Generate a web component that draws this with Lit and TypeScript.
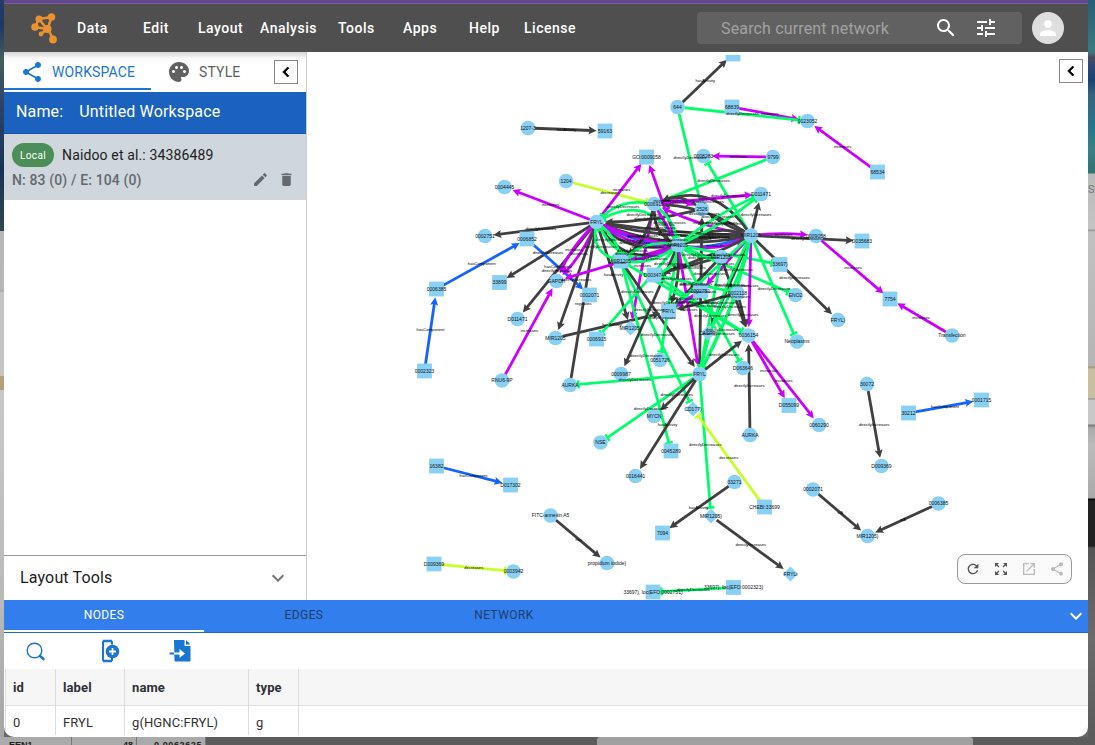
import { LitElement, html, css, svg } from "lit";
import { customElement } from "lit/decorators.js";

type Shape = "c" | "s" | "d";
type GraphNode = [string, Shape, number, number, string];
type Kind = "k" | "g" | "m" | "b" | "y";
// from, to, kind, label, bend (perpendicular control offset)
type GraphEdge = [string, string, Kind, string, number?];

const COLORS: Record<Kind, string> = { k: "#404040", g: "#00ff6a", m: "#cc00ff", b: "#1464ff", y: "#c8ff28" };
const DD = "directlyDecreases";
const DI = "directlyIncreases";
const INC = "increases";
const DEC = "decreases";
const HC = "hasComponent";
const HA = "hasActivity";
const REG = "regulates";

const NODES: GraphNode[] = [
  ["n644", "c", 677.5, 107, "644"], ["top", "s", 733, 54, ""], ["68839", "s", 732, 107, "68839"],
  ["23052", "c", 807.5, 121, "0023052"], ["68534", "s", 877.5, 172, "68534"], ["9799", "c", 773, 157, "9799"],
  ["8283", "c", 703.5, 156, "0008283"], ["go", "s", 646.5, 157, "GO:0009058"], ["1207", "c", 528, 128, "1207-3"],
  ["59163", "s", 605, 131, "59163"], ["4445", "c", 504.5, 187, "0004445"], ["1204", "c", 566, 181, "1204"],
  ["2751", "c", 485, 236, "0002751"], ["6852", "s", 527, 239, "0006852"], ["6385", "s", 436.5, 289, "0006385"],
  ["2323", "s", 424.5, 371, "0002323"], ["33899", "s", 499.5, 282.5, "33899"], ["F", "c", 596.5, 222, "FRYL"],
  ["6915", "c", 654, 204, "0006915"], ["2526", "c", 702, 209, "2526"], ["H", "c", 751, 235.5, "MIR1205"],
  ["J", "c", 678, 245, "MIR1205"], ["11471", "c", 761, 194, "D011471"], ["9058", "c", 816, 236, "0009058"],
  ["35683", "s", 862, 241, "D035683"], ["33697", "s", 780, 264.5, "33697)"], ["EN", "c", 795.5, 295, "ENO2"],
  ["7754", "s", 890, 299, "7754"], ["TR", "c", 952, 335.5, "Transfection"], ["FR2", "c", 838, 320, "FRYL)"],
  ["NEO", "c", 797, 341.5, "Neoplasms"], ["GA", "c", 556.5, 281, "GAPDH"], ["2071", "s", 589.5, 295, "0002071"],
  ["MS", "s", 621, 261, "MIR1205"], ["3474", "s", 654, 275, "D003474"], ["FS", "s", 668.5, 311.5, "FRYL"],
  ["MC", "c", 721, 257, "MIR1205"], ["SQ", "s", 700.5, 291, "0002751"], ["2118", "c", 737.5, 293, "0002118"],
  ["CA", "d", 708, 333, "CASP7)"], ["36154", "c", 748.5, 335.5, "0036154"], ["FB", "c", 699.5, 374, "FRYL"],
  ["MD", "d", 630.5, 328, "MIR1205)"], ["M5", "c", 555.5, 338, "MIR1205"], ["S15", "s", 596.5, 339, "0006915"],
  ["D11", "c", 517.5, 319, "D011471"], ["RNU", "c", 502, 380.5, "RNU6-9P"], ["AU", "c", 570, 385, "AURKA"],
  ["9987", "c", 621, 374, "0009987"], ["51726", "c", 660, 360, "0051726"], ["63646", "c", 743, 368, "D063646"],
  ["55099", "s", 789, 405.5, "D055099"], ["60290", "c", 819, 425, "0060290"], ["AU2", "c", 750, 435, "AURKA"],
  ["CD", "d", 693, 409, "CD177)"], ["MY", "c", 654, 416, "MYCN"], ["NSE", "c", 600.5, 442.5, "NSE"],
  ["45289", "s", 671, 451, "0045289"], ["16441", "c", 635.5, 476, "0016441"], ["33271", "c", 734.5, 482, "33271"],
  ["CH", "s", 764.5, 507, "CHEBI:33699"], ["7094", "s", 662.5, 533, "7094"], ["MD2", "d", 711, 516, "MIR1205)"],
  ["FD", "d", 790.5, 574, "FRYLi"], ["L1", "s", 653, 592, "33697), loc(EFO:0002751)"],
  ["L2", "s", 733.5, 587.5, "33697), loc(EFO:0002323)"], ["30072", "c", 867, 384, "30072"],
  ["9369", "c", 881.5, 466, "D009369"], ["30212", "s", 908.5, 413, "30212"], ["1715", "s", 981.5, 400, "0001715"],
  ["2071b", "c", 813, 489.5, "0002071"], ["M6", "c", 867.5, 536, "MIR1205)"], ["6385b", "c", 938.5, 503.5, "0006385"],
  ["16382", "s", 436.5, 466, "16382"], ["17302", "s", 510.5, 485, "D017302"], ["FI", "c", 550.5, 515.5, "FITC-annexin A5"],
  ["PI", "c", 607, 563, "propidium iodide)"], ["9369b", "s", 434, 564, "D009369"], ["3942", "c", 513.5, 571.5, "0003942"],
];

const EDGES: GraphEdge[] = [
  ["n644", "top", "k", HA], ["68839", "23052", "m", INC], ["n644", "23052", "g", DD], ["n644", "2526", "g", DD],
  ["68534", "23052", "m", INC], ["9799", "8283", "m", INC], ["9799", "6915", "g", DD], ["H", "8283", "g", DD],
  ["1207", "59163", "k", HA], ["F", "4445", "m", INC], ["1204", "6915", "y", DEC], ["F", "2751", "k", DI],
  ["F", "33899", "k", DI], ["6385", "6852", "b", HC], ["2323", "6385", "b", HC], ["6852", "2071", "b", HC],
  ["F", "go", "m", INC], ["J", "go", "m", INC], ["F", "D11", "k", DI], ["F", "GA", "m", INC, 4], ["F", "GA", "m", INC, -4],
  ["F", "M5", "k", DI], ["AU", "F", "k", REG], ["F", "MD", "k", HA], ["M5", "FS", "k", HA], ["RNU", "GA", "m", INC],
  ["J", "GA", "m", INC], ["6915", "MD", "m", INC], ["J", "S15", "g", DD], ["MS", "45289", "g", DD],
  ["MS", "CD", "g", DD], ["J", "9987", "k", DI], ["MS", "FB", "k", DI], ["J", "51726", "g", DD],
  ["F", "H", "b", INC, -20], ["H", "F", "k", DI, 3], ["H", "F", "k", DI, 14], ["H", "F", "k", DI, 7],
  ["J", "F", "k", DI, 12], ["F", "J", "k", DI, -22], ["F", "J", "m", INC, -9], ["F", "J", "m", INC, -4],
  ["J", "F", "g", DD, 26], ["6915", "F", "g", DD, -9], ["J", "F", "g", DD, -25], ["F", "MS", "g", DD, -12],
  ["F", "MS", "g", DD, 5], ["6915", "MS", "k", DI, 7], ["2526", "F", "k", DI, 4], ["2526", "6915", "k", DI, -8],
  ["6915", "2526", "m", INC, 5], ["H", "6915", "k", DI, -24], ["H", "6915", "k", DI, -8], ["H", "2526", "k", DI, 2],
  ["H", "6915", "m", INC, 4], ["H", "J", "k", DI, -5], ["J", "H", "k", DI, 9], ["J", "H", "m", INC, -7],
  ["J", "H", "k", DI, 3], ["6915", "J", "m", INC], ["6915", "J", "g", DD, 5], ["6915", "J", "k", DI, -8],
  ["J", "MS", "g", DD, -8], ["J", "MS", "m", INC, 3], ["J", "MS", "g", DD, 7], ["MC", "3474", "k", DI],
  ["H", "3474", "k", DI, 3], ["J", "3474", "g", DD, 7], ["J", "FS", "k", DI, 4], ["MC", "FS", "k", DI],
  ["J", "FB", "m", INC], ["FB", "2526", "k", DI], ["H", "SQ", "m", INC], ["J", "SQ", "g", DD],
  ["J", "MC", "g", DD, -5], ["H", "FS", "g", DD], ["6915", "11471", "m", INC], ["J", "11471", "g", DD, -4],
  ["J", "11471", "g", DD, 4], ["H", "11471", "k", DI], ["H", "9058", "m", INC, 2], ["H", "35683", "k", DI],
  ["9058", "7754", "m", INC], ["TR", "7754", "m", INC], ["J", "33697", "g", DD], ["J", "EN", "g", DD],
  ["H", "NEO", "g", DD], ["H", "FR2", "k", DI], ["H", "36154", "m", INC], ["MC", "36154", "k", DI],
  ["H", "CA", "k", DI], ["H", "CA", "g", DD, 5], ["H", "FB", "g", DD, -6],
  ["H", "FB", "g", DD, 6], ["2118", "FB", "g", DD], ["MC", "FB", "g", DD],
  ["MS", "36154", "g", DD], ["3474", "36154", "g", DD], ["3474", "2118", "g", DD], ["SQ", "63646", "g", DD],
  ["2118", "36154", "k", DI], ["SQ", "FS", "m", INC], ["2118", "FS", "k", DI], ["FB", "36154", "k", DI],
  ["36154", "55099", "m", INC], ["36154", "60290", "m", INC], ["AU2", "36154", "k", DI], ["FB", "AU", "g", DD],
  ["FB", "NSE", "g", DD], ["FB", "MY", "k", DD], ["FB", "16441", "k", HA], ["FB", "MD2", "g", DD],
  ["CH", "CD", "y", DEC], ["33271", "7094", "k", HA], ["MD2", "FD", "k", DI], ["L2", "L1", "g", DD],
  ["30072", "9369", "k", DI], ["30212", "1715", "b", HC], ["2071b", "M6", "k", "isA"], ["6385b", "M6", "k", "isA"],
  ["16382", "17302", "b", HC], ["FI", "PI", "k", "has"], ["9369b", "3942", "y", DEC],
];

@customElement("network-graph")
export class NetworkGraph extends LitElement {
  static styles = css`
    :host { display: block; width: 781px; height: 548px; }
    svg { display: block; width: 100%; height: 100%; font-family: "Liberation Sans", Arial, sans-serif; }
    .line { fill: none; stroke-width: 2.8; }
    .edge-label { font-size: 4.1px; fill: #000; text-anchor: middle; }
    .node-label { font-size: 5px; fill: #111; text-anchor: middle; }
    .node { fill: #89d0f5; }
  `;

  private edge([from, to, kind, label, bend = 0]: GraphEdge) {
    const a = NODES.find((n) => n[0] === from)!;
    const b = NODES.find((n) => n[0] === to)!;
    const [x1, y1, x2, y2] = [a[2], a[3], b[2], b[3]];
    const len = Math.hypot(x2 - x1, y2 - y1);
    const cx = (x1 + x2) / 2 + ((y2 - y1) / len) * bend * 1.6;
    const cy = (y1 + y2) / 2 - ((x2 - x1) / len) * bend * 1.6;
    const inLen = Math.hypot(x2 - cx, y2 - cy);
    const ux = (x2 - cx) / inLen;
    const uy = (y2 - cy) / inLen;
    const outLen = Math.hypot(cx - x1, cy - y1);
    const sx = x1 + ((cx - x1) / outLen) * 7;
    const sy = y1 + ((cy - y1) / outLen) * 7;
    const gap = 8.4;
    const tx = x2 - ux * gap;
    const ty = y2 - uy * gap;
    const tee = kind === "g" || kind === "y";
    const ex = tee ? tx : tx - ux * 5;
    const ey = tee ? ty : ty - uy * 5;
    const color = COLORS[kind];
    const head = tee
      ? svg`<path d="M${tx - uy * 4} ${ty + ux * 4}L${tx + uy * 4} ${ty - ux * 4}" stroke=${color} stroke-width="2.4"/>`
      : svg`<path d="M${tx} ${ty}L${tx - ux * 8 - uy * 4} ${ty - uy * 8 + ux * 4}L${tx - ux * 6.6} ${ty - uy * 6.6}L${tx - ux * 8 + uy * 4} ${ty - uy * 8 - ux * 4}Z" fill=${color}/>`;
    return {
      shape: svg`<path class="line" stroke=${color} d="M${sx} ${sy}Q${cx} ${cy} ${ex} ${ey}"/>${head}`,
      label: svg`<text class="edge-label" x=${(x1 + x2) / 4 + cx / 2} y=${(y1 + y2) / 4 + cy / 2 + 1.4}>${label}</text>`,
    };
  }

  private node([, shape, x, y, label]: GraphNode) {
    return svg`${
      shape === "c"
        ? svg`<circle class="node" cx=${x} cy=${y} r="7.3"/>`
        : shape === "s"
          ? svg`<rect class="node" x=${x - 7.4} y=${y - 7.4} width="14.8" height="14.8"/>`
          : svg`<path class="node" d="M${x} ${y - 7.4}L${x + 7.4} ${y}L${x} ${y + 7.4}L${x - 7.4} ${y}Z"/>`
    }<text class="node-label" x=${x} y=${y + 1.8}>${label}</text>`;
  }

  render() {
    const edges = EDGES.map((e) => this.edge(e));
    return html`<svg viewBox="307 52 781 548">
      <defs><clipPath id="area"><rect x="307" y="55" width="781" height="545" /></clipPath></defs>
      <g clip-path="url(#area)">
        ${edges.map((e) => e.shape)} ${NODES.map((n) => this.node(n))} ${edges.map((e) => e.label)}
      </g>
    </svg>`;
  }
}

const icon = (d: string, size: number, cls = "") =>
  html`<svg class="icon ${cls}" width=${size} height=${size} viewBox="0 0 24 24"><path d=${d} /></svg>`;

const ICONS = {
  search: "M15.5 14h-.79l-.28-.27C15.41 12.59 16 11.11 16 9.5 16 5.91 13.09 3 9.5 3S3 5.91 3 9.5 5.91 16 9.5 16c1.61 0 3.09-.59 4.23-1.57l.27.28v.79l5 4.99L20.49 19l-4.99-5zm-6 0C7.01 14 5 11.99 5 9.5S7.01 5 9.5 5 14 7.01 14 9.5 11.99 14 9.5 14z",
  tune: "M3 17v2h6v-2H3zM3 5v2h10V5H3zm10 16v-2h8v-2h-8v-2h-2v6h2zM7 9v2H3v2h4v2h2V9H7zm14 4v-2H11v2h10zm-6-4h2V7h4V5h-4V3h-2v6z",
  person: "M12 12c2.21 0 4-1.79 4-4s-1.79-4-4-4-4 1.79-4 4 1.79 4 4 4zm0 2c-2.67 0-8 1.34-8 4v2h16v-2c0-2.66-5.33-4-8-4z",
  share: "M18 16.08c-.76 0-1.44.3-1.96.77L8.91 12.7c.05-.23.09-.46.09-.7s-.04-.47-.09-.7l7.05-4.11c.54.5 1.25.81 2.04.81 1.66 0 3-1.34 3-3s-1.34-3-3-3-3 1.34-3 3c0 .24.04.47.09.7L8.04 9.81C7.5 9.31 6.79 9 6 9c-1.66 0-3 1.34-3 3s1.34 3 3 3c.79 0 1.5-.31 2.04-.81l7.12 4.16c-.05.21-.08.43-.08.65 0 1.61 1.31 2.92 2.92 2.92 1.61 0 2.92-1.31 2.92-2.92s-1.31-2.92-2.92-2.92z",
  palette: "M12 2C6.49 2 2 6.49 2 12s4.49 10 10 10c1.38 0 2.5-1.12 2.5-2.5 0-.61-.23-1.2-.64-1.67-.08-.1-.13-.21-.13-.33 0-.28.22-.5.5-.5H16c3.31 0 6-2.69 6-6 0-4.96-4.49-9-10-9zm-5.5 11c-.83 0-1.5-.67-1.5-1.5S5.67 10 6.5 10s1.5.67 1.5 1.5S7.33 13 6.5 13zm3-4C8.67 9 8 8.33 8 7.5S8.67 6 9.5 6s1.5.67 1.5 1.5S10.33 9 9.5 9zm5 0c-.83 0-1.5-.67-1.5-1.5S13.67 6 14.5 6s1.5.67 1.5 1.5S15.33 9 14.5 9zm3 4c-.83 0-1.5-.67-1.5-1.5s.67-1.5 1.5-1.5 1.5.67 1.5 1.5-.67 1.5-1.5 1.5z",
  left: "M15.41 7.41L14 6l-6 6 6 6 1.41-1.41L10.83 12z",
  down: "M7.41 8.59L12 13.17l4.59-4.58L18 10l-6 6-6-6z",
  edit: "M3 17.25V21h3.75L17.81 9.94l-3.75-3.75L3 17.25zM20.71 7.04c.39-.39.39-1.02 0-1.41l-2.34-2.34c-.39-.39-1.02-.39-1.41 0l-1.83 1.83 3.75 3.75 1.83-1.83z",
  trash: "M6 19c0 1.1.9 2 2 2h8c1.1 0 2-.9 2-2V7H6v12zM19 4h-3.5l-1-1h-5l-1 1H5v2h14V4z",
  refresh: "M17.65 6.35C16.2 4.9 14.21 4 12 4c-4.42 0-7.99 3.58-7.99 8s3.57 8 7.99 8c3.73 0 6.84-2.55 7.73-6h-2.08c-.82 2.33-3.04 4-5.65 4-3.31 0-6-2.69-6-6s2.69-6 6-6c1.66 0 3.14.69 4.22 1.78L13 11h7V4l-2.35 2.35z",
  fit: "M15 3l2.3 2.3-2.89 2.87 1.42 1.42L18.7 6.7 21 9V3zM3 9l2.3-2.3 2.87 2.89 1.42-1.42L6.7 5.3 9 3H3zm6 12l-2.3-2.3 2.89-2.87-1.42-1.42L5.3 17.3 3 15v6zm12-6l-2.3 2.3-2.87-2.89-1.42 1.42 2.89 2.87L15 21h6z",
  open: "M19 19H5V5h7V3H3v18h18v-9h-2v7zM14 3v2h3.59l-9.83 9.83 1.41 1.41L19 6.41V10h2V3h-7z",
};

@customElement("app-root")
export class AppRoot extends LitElement {
  static styles = css`
    :host {
      display: block; width: 1095px; height: 745px; overflow: hidden;
      font-family: Roboto, sans-serif; color: #222;
    }
    * { box-sizing: border-box; }
    .icon { display: block; fill: currentColor; flex: none; }
    .desktop {
      display: grid; grid-template-columns: 4px 1084px 7px; grid-template-rows: 737px 8px; height: 745px;
      background: #666;
    }
    .left-edge { background: linear-gradient(#263b65 0, #1d3764 25px, #465d5b 60px, #2b4368 105px, #183255 170px, #31484c 231px, #b8b8b8 231px, #b6b6b6 290px, #9bab9f 290px, #c4c4c4 293px, #c3c3c3 376px, #b5a07c 376px, #b5a07c 390px, #c8c8c8 390px, #b9b9b9 600px, #a5a5a5 737px); }
    .right-edge {
      padding-top: 183px; font-size: 11px; color: #777; overflow: hidden;
      background: linear-gradient(#246075 0, #3a7b83 52px, #4c4b60 57px, #2b4974 66px, #174275 80px, #35657e 95px, #26758d 125px, #3a8085 150px, #2d7370 173px, #bababa 174px, #c4c4c4 229px, #929292 230px, #c1c1c1 232px, #b5b5b5 366px, #9d9277 367px, #c8bea0 369px, #c8bea0 398px, #888 399px, #c8c8c8 400px, #c8c8c8 424px, #777 425px, #aaa 428px, #bbb 446px, #aaa 498px, #000 499px, #222 501px, #222 546px, #555 548px, #6b6b6b 640px, #5b5b5b 737px);
    }
    .bottom-edge {
      grid-column: 1 / 4; display: grid; grid-template-columns: 72px 65px 69px 391px 376px 1fr;
      overflow: hidden; font: bold 9px/13px "Liberation Sans", sans-serif; color: #222; background: #5c5c5c;
    }
    .cell { background: #aaa; border-right: 1px solid #777; height: 8px; overflow: hidden; text-align: right; padding: 2px 3px 0; }
    .cell.first { text-align: left; padding-left: 9px; }
    .cell.last { letter-spacing: 0.6px; }
    .dock { background: #a0a0a0; border-radius: 3px 3px 0 0; }
    .window {
      width: 1084px; height: 737px; background: #fff; border-radius: 0 0 10px 10px; overflow: hidden;
      display: grid; grid-template-rows: 4px 48px 548px 33px 36px 68px;
    }
    .strip { background: #60498b; border-bottom: 1px solid #8058a5; }
    .toolbar { background: #4f4f4f; color: #fff; display: flex; align-items: center; }
    .logo { width: 32px; height: 32px; margin-left: 24px; }
    nav {
      display: grid; grid-template-columns: 66px 55px 62px 78px 65px 66px 55px 80px; margin-left: 17px;
      font-size: 14px; font-weight: 500; letter-spacing: 0.5px;
    }
    .search {
      width: 325px; height: 32px; margin-left: 93px; background: #616161; border-radius: 4px;
      display: flex; align-items: center; padding-left: 24px; color: #fff;
    }
    .search span { width: 213px; font-size: 16px; letter-spacing: 0.15px; color: #a1a1a1; }
    .search .tune { margin-left: 16px; }
    .avatar { width: 32px; height: 32px; margin-left: 10px; border-radius: 50%; background: #dedede; color: #fff; display: grid; place-items: center; }
    .main { display: grid; grid-template-columns: 303px 781px; }
    .side { border-right: 1px solid #ccc; display: grid; grid-template-rows: 40px 42px 66px 1fr 45px; }
    .tabs { display: flex; background: linear-gradient(#d4d4d4, #f8f8f8 6px, #fff 11px); font-size: 14px; letter-spacing: 0.15px; color: #616161; }
    .tab { display: flex; align-items: center; gap: 8px; height: 38px; padding: 4px 0 0 16px; width: 147px; }
    .tab.active { color: #1976d2; border-bottom: 2px solid #1976d2; }
    .tab.style { width: 123px; padding-top: 2px; }
    .fold { width: 24px; height: 24px; border: 1px solid #888; color: #000; background: #fff; display: grid; place-items: center; }
    .fold .icon { stroke: currentColor; stroke-width: 0.8px; }
    .tabs .fold { margin-top: 8px; }
    .workspace { background: #1b62bf; border-bottom: 1px solid #1554ac; color: #fff; font-size: 16px; letter-spacing: 0.15px; display: flex; align-items: center; gap: 16px; padding: 0 12px 3px; }
    .network { background: #cfd6dc; padding: 9px 10px 0 8px; }
    .title { display: flex; align-items: center; gap: 8px; height: 24px; font-size: 14px; letter-spacing: 0.14px; color: #212121; }
    .chip { background: #4b8e57; color: #fff; width: 42px; height: 24px; border-radius: 12px; font-size: 10px; letter-spacing: 0.35px; line-height: 25px; text-align: center; }
    .counts { display: flex; align-items: center; height: 25px; font-size: 14px; font-weight: 500; letter-spacing: 0.13px; color: #66696c; }
    .counts span { flex: 1; }
    .counts .icon { margin-right: 1px; width: 17px; height: 17px; }
    .counts .icon + .icon { margin-left: 8px; }
    .layout-tools { border-top: 1px solid #999; display: flex; align-items: center; justify-content: space-between; padding: 0 16px 1px; font-size: 16px; letter-spacing: 0.15px; }
    .layout-tools .icon { color: #757575; }
    .canvas { position: relative; }
    .canvas > .fold { position: absolute; right: 5px; top: 7px; }
    .controls {
      position: absolute; right: 16px; bottom: 16px; width: 115px; height: 30px; padding: 0 7px; border: 1px solid #999;
      border-radius: 8px; background: #fafafa; color: #555; display: flex; align-items: center; gap: 12px;
    }
    .controls .muted { color: #bbb; }
    .table-tabs { background: #327eed; border-bottom: 1px solid #2368c8; display: flex; font-size: 12px; letter-spacing: 0.4px; color: #203e6c; }
    .table-tab { width: 200px; height: 32px; line-height: 30px; text-align: center; }
    .table-tab.active { color: #fff; border-bottom: 2px solid #fff; }
    .table-tabs .icon { margin: 4px 0 0 auto; color: #fff; }
    .actions { display: grid; grid-template-columns: 74px 70px 40px; padding: 6px 0 0 18px; color: #1976d2; }
    .actions svg { display: block; }
    .table { display: grid; grid-template-columns: 51px 69px 124px 50px 1fr; grid-template-rows: 37px 29px; padding-left: 1px; font-size: 13px; color: #333; }
    .table div { border-right: 1px solid #ddd; padding-left: 7px; }
    .table div:nth-child(5n + 1) { border-left: 1px solid #ddd; }
    .table div:nth-child(5n) { border-right: 0; }
    .head { background: #f6f6f6; border-bottom: 1px solid #ddd; line-height: 37px; font-weight: 700; color: #303137; letter-spacing: 0.1px; }
    .row { line-height: 33px; letter-spacing: 0.1px; }
  `;

  private logo() {
    return html`<svg class="logo" viewBox="0 0 32 32">
      <g stroke="#ea9130" stroke-width="3.2" fill="#ea9130" stroke-linecap="round">
        <path d="M19 17L11 7M20 16L23.500 5M19 17L7 15M19 17L12.500 22.500M20 17L25 27M11 7L23.500 5M7 15L11 7" stroke-width="2.500" fill="none" />
        <circle cx="11" cy="7" r="2" /><circle cx="23.500" cy="5" r="2.200" /><circle cx="7" cy="15" r="2.200" />
        <circle cx="13" cy="22" r="0.800" /><circle cx="25" cy="27.500" r="2.300" /><circle cx="19.500" cy="17" r="2.500" />
      </g>
    </svg>`;
  }

  render() {
    const menu = ["Data", "Edit", "Layout", "Analysis", "Tools", "Apps", "Help", "License"];
    return html`<div class="desktop">
      <div class="left-edge"></div>
      <div class="window">
        <div class="strip"></div>
        <header class="toolbar">
          ${this.logo()}
          <nav>${menu.map((m) => html`<span>${m}</span>`)}</nav>
          <div class="search"><span>Search current network</span>${icon(ICONS.search, 24)}${icon(ICONS.tune, 24, "tune")}</div>
          <div class="avatar">${icon(ICONS.person, 24)}</div>
        </header>
        <section class="main">
          <aside class="side">
            <div class="tabs">
              <div class="tab active">${icon(ICONS.share, 24)}<span>WORKSPACE</span></div>
              <div class="tab style">${icon(ICONS.palette, 24)}<span>STYLE</span></div>
              <div class="fold">${icon(ICONS.left, 20)}</div>
            </div>
            <div class="workspace"><span>Name:</span><span>Untitled Workspace</span></div>
            <div class="network">
              <div class="title"><span class="chip">Local</span><span>Naidoo et al.: 34386489</span></div>
              <div class="counts"><span>N: 83 (0) / E: 104 (0)</span>${icon(ICONS.edit, 18)}${icon(ICONS.trash, 18)}</div>
            </div>
            <div></div>
            <div class="layout-tools"><span>Layout Tools</span>${icon(ICONS.down, 24)}</div>
          </aside>
          <div class="canvas">
            <network-graph></network-graph>
            <div class="fold">${icon(ICONS.left, 20)}</div>
            <div class="controls">
              ${icon(ICONS.refresh, 16)}${icon(ICONS.fit, 16)}${icon(ICONS.open, 16, "muted")}${icon(ICONS.share, 16, "muted")}
            </div>
          </div>
        </section>
        <div class="table-tabs">
          <div class="table-tab active">NODES</div><div class="table-tab">EDGES</div><div class="table-tab">NETWORK</div>
          ${icon(ICONS.down, 24)}
        </div>
        <div class="actions">
          <svg width="28" height="26" viewBox="0 0 28 26" fill="none" stroke="currentColor">
            <circle cx="12.5" cy="11.5" r="7.3" stroke-width="1.4" /><path d="M18 17L21.5 20" stroke-width="2.6" stroke-linecap="round" />
          </svg>
          <svg width="28" height="26" viewBox="0 0 28 26">
            <path d="M16 5.500V3.500Q16 2 14.500 2H8.500Q7 2 7 3.500V20.500Q7 22 8.500 22H14.500Q16 22 16 20.500V19" fill="none" stroke="currentColor" stroke-width="2" />
            <path d="M7 2H16M7 22H16" stroke="currentColor" stroke-width="2.500" />
            <circle cx="16.500" cy="12.500" r="6.800" fill="currentColor" /><path d="M13 12.500H20M16.500 9V16" stroke="#fff" stroke-width="1.800" />
          </svg>
          <svg width="28" height="26" viewBox="0 0 28 26">
            <path d="M8 1H18.500V7H24.500V21.500Q24.500 22.500 23.500 22.500H9.500Q8.500 22.500 8.500 21.500Z" fill="currentColor" /><path d="M20 1L24.500 5.500H20Z" fill="currentColor" />
            <path d="M8 14.500H15" stroke="#fff" stroke-width="1.900" /><path d="M13.500 10L19 14.500L13.500 19Z" fill="#fff" />
            <path d="M3.500 14.500H8" stroke="currentColor" stroke-width="2" />
          </svg>
        </div>
        <div class="table">
          ${["id", "label", "name", "type", ""].map((h) => html`<div class="head">${h}</div>`)}
          ${["0", "FRYL", "g(HGNC:FRYL)", "g", ""].map((c) => html`<div class="row">${c}</div>`)}
        </div>
      </div>
      <div class="right-edge">S</div>
      <div class="bottom-edge">
        <div class="cell first">EEN1</div><div class="cell">48</div><div class="cell last">0.0062625</div><div></div><div class="dock"></div><div></div>
      </div>
    </div>`;
  }
}
